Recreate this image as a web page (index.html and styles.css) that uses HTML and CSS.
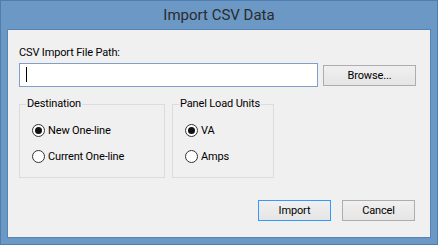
FILE: index.html
```html
<!DOCTYPE html>
<html lang="en">

<head>
  <meta charset="UTF-8" />
  <title>Import CSV Data</title>
  <meta name="viewport" content="width=device-width, initial-scale=1.0" />
  <link rel="stylesheet" href="styles.css">
</head>

<body>

  <div class="window">
    <div class="title">Import CSV Data</div>

    <div class="client">
      <label class="path-label" for="filePath">CSV Import File Path:</label>
      <div class="path-row">
        <div class="path-input" id="filePath"><span class="caret"></span></div>
        <button class="btn browse">Browse...</button>
      </div>

      <div class="groups">
        <fieldset class="group dest">
          <legend>Destination</legend>
          <label class="radio"><input type="radio" name="dest" checked /> New One-line</label>
          <label class="radio"><input type="radio" name="dest" /> Current One-line</label>
        </fieldset>

        <fieldset class="group units">
          <legend>Panel Load Units</legend>
          <label class="radio"><input type="radio" name="units" checked /> VA</label>
          <label class="radio"><input type="radio" name="units" /> Amps</label>
        </fieldset>
      </div>

      <div class="actions">
        <button class="btn default">Import</button>
        <button class="btn">Cancel</button>
      </div>
    </div>
  </div>

</body>

</html>
```

FILE: styles.css
```css
* {
  box-sizing: border-box;
}

body {
  margin: 0;
  padding: 0;
  font-family: Roboto, "Noto Sans", sans-serif;
  font-size: 11px;
  letter-spacing: -0.15px;
  color: #000;
  background-color: #6b98c4;
}

.window {
  width: 438px;
  height: 245px;
  display: flex;
  flex-direction: column;
  padding: 0 6px 6px;
  background-color: #6b98c4;
  border: 1px solid #4f7eae;
}

.title {
  height: 28px;
  line-height: 28px;
  text-align: center;
  font-size: 15px;
  letter-spacing: 0;
  color: #2b2b2b;
}

.client {
  flex: 1;
  background-color: #f0f0f0;
  border: 1px solid #5683b2;
  padding: 15px 14px 0 11px;
}

.path-label {
  display: block;
  height: 18px;
  line-height: 16px;
}

.path-row {
  display: flex;
  align-items: center;
  gap: 5px;
}

.path-input {
  width: 299px;
  height: 24px;
  background-color: #fff;
  border: 1px solid #7f9fc8;
  padding: 3px 0 0 6px;
}

.caret {
  display: block;
  width: 1px;
  height: 15px;
  background-color: #000;
}

.btn {
  font-family: inherit;
  font-size: 11px;
  letter-spacing: -0.15px;
  color: #000;
  height: 21px;
  padding: 0;
  background: linear-gradient(#f0f0f0, #e5e5e5);
  border: 1px solid #adadad;
  border-radius: 0;
}

.browse {
  width: 93px;
}

.btn.default {
  border-color: #3399ff;
}

.groups {
  display: flex;
  gap: 7px;
  margin-top: 10px;
}

fieldset.group {
  margin: 0;
  height: 81px;
  padding: 6px 0 0 12px;
  border: 1px solid #dcdcdc;
  border-radius: 0;
}

.group legend {
  padding: 0 1px;
  margin-left: -6px;
  line-height: 14px;
  white-space: nowrap;
}

.dest {
  width: 146px;
}

.units {
  width: 102px;
}

.radio {
  display: flex;
  align-items: center;
  height: 26px;
  gap: 3px;
}

.radio input {
  appearance: none;
  -webkit-appearance: none;
  margin: 0;
  width: 13px;
  height: 13px;
  border: 1px solid #333;
  border-radius: 50%;
  background-color: #fff;
  display: flex;
  align-items: center;
  justify-content: center;
}

.radio input:checked::after {
  content: "";
  width: 7px;
  height: 7px;
  border-radius: 50%;
  background-color: #111;
}

.actions {
  display: flex;
  justify-content: flex-end;
  gap: 11px;
  margin-top: 22px;
  padding-right: 1px;
}

.actions .btn {
  width: 73px;
}
```
